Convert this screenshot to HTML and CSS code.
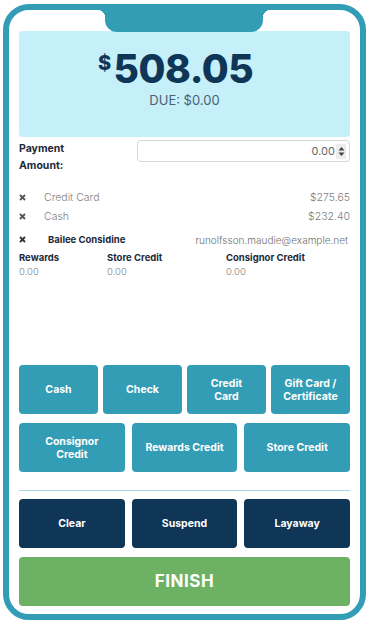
FILE: index.html
```html
<!DOCTYPE html>
<html lang="en">
<head>
    <meta charset="UTF-8">
    <meta name="viewport" content="width=device-width, initial-scale=1.0">
    <title>Payment</title>
    <link rel="stylesheet" href="styles.css">
</head>
<body>
    <div class="phone">
        <div class="notch"></div>

        <div class="total">
            <div class="amount"><span class="cur">$</span>508.05</div>
            <div class="due">DUE: $0.00</div>
        </div>

        <div class="pay-row">
            <label class="pay-label">Payment<br>Amount:</label>
            <div class="pay-input">
                <span>0.00</span>
                <span class="spin">
                    <svg width="7" height="11" viewBox="0 0 7 11"><path d="M3.5 1 L6.5 4.5 H0.5 Z M3.5 10 L6.5 6.5 H0.5 Z" fill="#444"/></svg>
                </span>
            </div>
        </div>

        <div class="tenders">
            <div class="tender">
                <svg class="x" width="7" height="7" viewBox="0 0 7 7"><path d="M1 1 L6 6 M6 1 L1 6" stroke="#555" stroke-width="1.8"/></svg>
                <span class="t-name">Credit Card</span>
                <span class="t-amt">$275.65</span>
            </div>
            <div class="tender">
                <svg class="x" width="7" height="7" viewBox="0 0 7 7"><path d="M1 1 L6 6 M6 1 L1 6" stroke="#555" stroke-width="1.8"/></svg>
                <span class="t-name">Cash</span>
                <span class="t-amt">$232.40</span>
            </div>
        </div>

        <div class="customer">
            <svg class="x" width="7" height="7" viewBox="0 0 7 7"><path d="M1 1 L6 6 M6 1 L1 6" stroke="#333" stroke-width="1.8"/></svg>
            <span class="c-name">Bailee Considine</span>
            <span class="c-mail">runolfsson.maudie@example.net</span>
        </div>

        <div class="balances">
            <div class="b-head">Rewards</div>
            <div class="b-head">Store Credit</div>
            <div class="b-head">Consignor Credit</div>
            <div class="b-val">0.00</div>
            <div class="b-val">0.00</div>
            <div class="b-val">0.00</div>
        </div>

        <div class="actions">
            <div class="btn-row four">
                <button class="btn teal">Cash</button>
                <button class="btn teal">Check</button>
                <button class="btn teal">Credit<br>Card</button>
                <button class="btn teal">Gift Card /<br>Certificate</button>
            </div>
            <div class="btn-row three">
                <button class="btn teal">Consignor<br>Credit</button>
                <button class="btn teal">Rewards Credit</button>
                <button class="btn teal">Store Credit</button>
            </div>
            <hr class="divider">
            <div class="btn-row three">
                <button class="btn navy">Clear</button>
                <button class="btn navy">Suspend</button>
                <button class="btn navy">Layaway</button>
            </div>
            <button class="btn finish">FINISH</button>
        </div>
    </div>
</body>
</html>
```

FILE: styles.css
```css
body {
    margin: 0;
    background: #ffffff;
    font-family: 'Inter', 'DejaVu Sans', sans-serif;
}

.phone {
    position: relative;
    box-sizing: border-box;
    width: 363px;
    height: 616px;
    margin: 4px 0 0 3px;
    border: 6px solid #339db5;
    border-radius: 26px;
    padding: 21px 10px 8px 10px;
    display: flex;
    flex-direction: column;
}

/* notch on top of the frame */
.notch {
    position: absolute;
    top: -6px;
    left: 96px;
    width: 158px;
    height: 28px;
    background: #339db5;
    border-radius: 0 0 12px 12px;
}

.notch::before,
.notch::after {
    content: "";
    position: absolute;
    top: 6px;
    width: 8px;
    height: 8px;
}

.notch::before {
    left: -8px;
    background: radial-gradient(circle at 0 100%, transparent 8px, #339db5 8.5px);
}

.notch::after {
    right: -8px;
    background: radial-gradient(circle at 100% 100%, transparent 8px, #339db5 8.5px);
}

.total {
    height: 106px;
    box-sizing: border-box;
    background: #c5f0f9;
    border-radius: 4px;
    padding-top: 9px;
    text-align: center;
}

.amount {
    padding-right: 18px;
    font-size: 39px;
    line-height: 46px;
    font-weight: 800;
    color: #0f3557;
    letter-spacing: -0.5px;
}

.amount .cur {
    font-size: 20px;
    vertical-align: 13px;
    margin-right: 3px;
}

.due {
    font-size: 13px;
    line-height: 16px;
    color: #4b5f75;
}

.pay-row {
    display: flex;
    align-items: flex-start;
    margin-top: 3px;
}

.pay-label {
    width: 118px;
    flex-shrink: 0;
    font-size: 10.5px;
    line-height: 17px;
    font-weight: 700;
    color: #1d2a3a;
}

.pay-input {
    flex: 1;
    height: 22px;
    box-sizing: border-box;
    border: 1px solid #d6d6d6;
    border-radius: 4px;
    display: flex;
    align-items: center;
    justify-content: flex-end;
    padding-right: 3px;
    font-size: 11px;
    color: #666;
}

.spin {
    display: flex;
    align-items: center;
    justify-content: center;
    width: 10px;
    height: 15px;
    margin-left: 1px;
    background: #ececec;
}

.tenders {
    margin-top: 14px;
}

.tender,
.customer {
    display: flex;
    align-items: center;
    height: 19px;
    font-size: 10.5px;
}

.x {
    flex-shrink: 0;
}

.t-name {
    margin-left: 18px;
    color: #808080;
    font-weight: 300;
}

.t-amt {
    margin-left: auto;
    color: #808080;
    font-weight: 300;
}

.customer {
    margin-top: 4px;
}

.c-name {
    margin-left: 22px;
    font-size: 9.5px;
    font-weight: 700;
    color: #1d2a3a;
}

.c-mail {
    margin-left: auto;
    margin-right: 2px;
    color: #707070;
    font-weight: 300;
    font-size: 10px;
}

.balances {
    margin-top: 2px;
    display: grid;
    grid-template-columns: 88px 119px 1fr;
    font-size: 9.5px;
    line-height: 14px;
}

.b-head {
    font-weight: 700;
    color: #1d2a3a;
}

.b-val {
    color: #808080;
    font-weight: 300;
}

.actions {
    margin-top: auto;
}

.btn-row {
    display: grid;
    margin-bottom: 9px;
}

.btn-row.four {
    grid-template-columns: repeat(4, 1fr);
    gap: 5px;
}

.btn-row.three {
    grid-template-columns: repeat(3, 1fr);
    gap: 7px;
}

.btn {
    height: 49px;
    border: none;
    border-radius: 4px;
    color: #ffffff;
    font-family: inherit;
    font-size: 10.5px;
    line-height: 13px;
    font-weight: 700;
    padding: 0 4px;
}

.teal {
    background: #339db5;
}

.navy {
    background: #0f3557;
}

.divider {
    border: none;
    border-top: 1px solid #a8d8e6;
    margin: 18px 0 8px 0;
}

.finish {
    display: block;
    width: 100%;
    background: #6db164;
    font-size: 17px;
    letter-spacing: 0.5px;
}
```
